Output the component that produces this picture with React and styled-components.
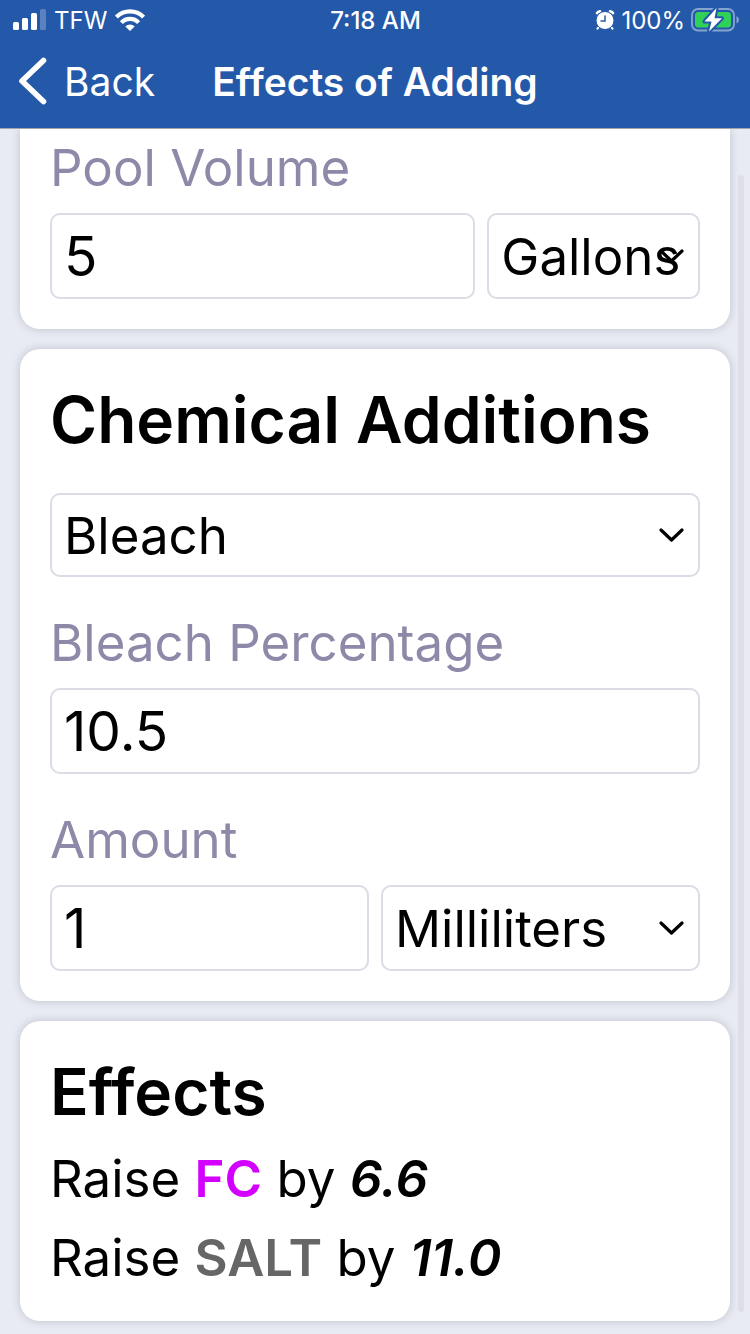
import React from 'react';
import styled, { createGlobalStyle } from 'styled-components';

const GlobalStyle = createGlobalStyle`
  *, *::before, *::after { box-sizing: border-box; }
  body {
    margin: 0;
    background: #e8ebf4;
    color: #000;
    font-family: Inter, "Liberation Sans", sans-serif;
    font-size: 51px;
  }
`;

const Header = styled.header`
  position: sticky;
  top: 0;
  z-index: 2;
  background: #2459a9;
  color: #fff;
  border-bottom: 1px solid #a2a4a9;
`;

const StatusBar = styled.div`
  display: grid;
  grid-template-columns: 1fr auto 1fr;
  align-items: center;
  height: 40px;
  padding: 0 11px 0 12px;
  font-size: 24px;
`;

const StatusGroup = styled.div`
  display: flex;
  align-items: center;
  justify-content: ${(p) => (p.$end ? 'flex-end' : 'flex-start')};
  gap: ${(p) => (p.$end ? 6 : 8)}px;
`;

const Clock = styled.time`
  font-weight: 500;
`;

const NavBar = styled.nav`
  display: grid;
  grid-template-columns: 1fr auto 1fr;
  align-items: center;
  height: 88px;
  padding: 0 18px 6px;
`;

const BackLink = styled.a`
  display: flex;
  align-items: center;
  gap: 16px;
  color: inherit;
  font-size: 39px;
  text-decoration: none;
`;

const Title = styled.h1`
  margin: 0;
  font-size: 39px;
  font-weight: 600;
`;

const Content = styled.main`
  display: flex;
  flex-direction: column;
  gap: 20px;
  padding: 0 20px 13px;
`;

const Card = styled.section`
  padding: ${(p) => (p.$scrolled ? '3px 30px 30px' : '30px')};
  border-radius: ${(p) => (p.$scrolled ? '0 0 20px 20px' : '20px')};
  background: #fff;
  box-shadow: 0 0 10px rgba(0, 0, 0, 0.18);
`;

const Heading = styled.h2`
  margin: 0 0 ${(p) => (p.$tight ? 12 : 32)}px;
  font-size: 64px;
  line-height: 82px;
  font-weight: 600;
`;

const Field = styled.div`
  & + & { margin-top: 30px; }
`;

const Label = styled.label`
  display: block;
  padding-bottom: 9px;
  color: #8e89a8;
  line-height: 72px;
`;

const Row = styled.div`
  display: grid;
  grid-template-columns: ${(p) => p.$columns};
  gap: 12px;
`;

const TextInput = styled.input`
  display: block;
  width: 100%;
  min-width: 0;
  height: 86px;
  padding: 0 12px;
  border: 2px solid #dcdbe6;
  border-radius: 10px;
  background: #fff;
  color: inherit;
  font: inherit;
  font-size: 55px;
  outline: none;
`;

const SelectWrap = styled.div`
  position: relative;
  min-width: 0;
`;

const SelectBox = styled.select`
  display: block;
  appearance: none;
  width: 100%;
  height: ${(p) => (p.$short ? 84 : 86)}px;
  padding: 0 0 0 12px;
  border: 2px solid #dcdbe6;
  border-radius: 10px;
  background: #fff;
  color: inherit;
  font: inherit;
  outline: none;
`;

const Chevron = styled.svg`
  position: absolute;
  top: 50%;
  right: 16px;
  transform: translateY(-50%);
  pointer-events: none;
`;

const Effect = styled.p`
  margin: 0;
  line-height: 67px;
  & + & { margin-top: 12px; }
`;

const Chemical = styled.span`
  color: ${(p) => p.$color};
  font-weight: 600;
`;

const Value = styled.em`
  font-weight: 600;
`;

const ScrollThumb = styled.div`
  position: fixed;
  z-index: 1;
  top: 175px;
  right: 6px;
  bottom: 22px;
  width: 6px;
  border-radius: 3px;
  background: #dfdee8;
`;

function Select({ options, ...rest }) {
  return (
    <SelectWrap>
      <SelectBox {...rest}>
        {options.map((o) => (
          <option key={o}>{o}</option>
        ))}
      </SelectBox>
      <Chevron width="25" height="15" viewBox="0 0 25 15" aria-hidden="true">
        <path d="M2 2.500L12.500 12.500L23 2.500" fill="none" stroke="#000" strokeWidth="3.200" strokeLinecap="round" strokeLinejoin="round" />
      </Chevron>
    </SelectWrap>
  );
}

const SignalIcon = () => (
  <svg width="34" height="22" viewBox="0 0 34 22" aria-hidden="true" fill="#fff">
    <rect x="1" y="13" width="6" height="8" rx="1.500" />
    <rect x="10" y="9" width="6" height="12" rx="1.500" />
    <rect x="19" y="4" width="6" height="17" rx="1.500" />
    <rect x="28" y="0" width="6" height="21" rx="1.500" opacity="0.250" />
  </svg>
);

const WifiIcon = () => (
  <svg width="30" height="22" viewBox="0 0 30 22" aria-hidden="true">
    <g fill="none" stroke="#fff" strokeWidth="4.200">
      <path d="M1.400 8.100A19 19 0 0 1 28.600 8.100" />
      <path d="M6.400 13.600A11.700 11.700 0 0 1 23.600 13.600" />
    </g>
    <path d="M15 22L10.300 17.400A6.700 6.700 0 0 1 19.700 17.400Z" fill="#fff" />
  </svg>
);

const AlarmIcon = () => (
  <svg width="20" height="20" viewBox="0 0 20 20" aria-hidden="true">
    <g fill="none" stroke="#fff" strokeLinecap="round">
      <path d="M2 3.200Q2.800 1.600 5 1.400M18 3.200Q17.200 1.600 15 1.400" strokeWidth="2.600" />
      <path d="M4 17L2.500 18.700M16 17L17.500 18.700" strokeWidth="2" />
    </g>
    <circle cx="10" cy="10.500" r="9" fill="#fff" stroke="#2459a9" strokeWidth="1" />
    <path d="M10 5.500V11H5.500" fill="none" stroke="#2459a9" strokeWidth="1.500" />
  </svg>
);

const BatteryIcon = () => (
  <svg width="48" height="24" viewBox="0 0 48 24" aria-hidden="true">
    <rect x="1" y="1" width="42" height="21.500" rx="6" fill="none" stroke="#fff" strokeWidth="1.800" opacity="0.450" />
    <path d="M45.500 8Q48 9 48 11.700T45.500 15.500Z" fill="#fff" opacity="0.450" />
    <rect x="4" y="4" width="36" height="15.500" rx="3.500" fill="#30d158" />
    <path d="M25.500 0L13.500 13.400H20.500L18 23.500L31 10.300H23.500Z" fill="#fff" stroke="#2459a9" strokeWidth="4" strokeLinejoin="round" />
    <path d="M25.500 0L13.500 13.400H20.500L18 23.500L31 10.300H23.500Z" fill="#fff" />
  </svg>
);

const BackIcon = () => (
  <svg width="30" height="48" viewBox="0 0 30 48" aria-hidden="true">
    <path d="M25.500 3.500L4 24L25.500 44.500" fill="none" stroke="#fff" strokeWidth="5.600" strokeLinecap="round" strokeLinejoin="round" />
  </svg>
);

export default function App() {
  return (
    <>
      <GlobalStyle />
      <Header>
        <StatusBar>
          <StatusGroup>
            <SignalIcon />
            <span>TFW</span>
            <WifiIcon />
          </StatusGroup>
          <Clock>7:18 AM</Clock>
          <StatusGroup $end>
            <AlarmIcon />
            <span>100%</span>
            <BatteryIcon />
          </StatusGroup>
        </StatusBar>
        <NavBar>
          <BackLink href="#back">
            <BackIcon />
            Back
          </BackLink>
          <Title>Effects of Adding</Title>
        </NavBar>
      </Header>
      <Content>
        <Card $scrolled>
          <Label htmlFor="volume">Pool Volume</Label>
          <Row $columns="2fr 1fr">
            <TextInput id="volume" inputMode="decimal" defaultValue="5" />
            <Select aria-label="Volume unit" options={['Gallons', 'Liters']} />
          </Row>
        </Card>
        <Card>
          <Heading>Chemical Additions</Heading>
          <Field>
            <Select $short aria-label="Chemical" options={['Bleach', 'Salt']} />
          </Field>
          <Field>
            <Label htmlFor="percentage">Bleach Percentage</Label>
            <TextInput id="percentage" inputMode="decimal" defaultValue="10.5" />
          </Field>
          <Field>
            <Label htmlFor="amount">Amount</Label>
            <Row $columns="1fr 1fr">
              <TextInput id="amount" inputMode="decimal" defaultValue="1" />
              <Select aria-label="Amount unit" options={['Milliliters', 'Ounces']} />
            </Row>
          </Field>
        </Card>
        <Card>
          <Heading $tight>Effects</Heading>
          <Effect>
            Raise <Chemical $color="#d400ff">FC</Chemical> by <Value>6.6</Value>
          </Effect>
          <Effect>
            Raise <Chemical $color="#666666">SALT</Chemical> by <Value>11.0</Value>
          </Effect>
        </Card>
      </Content>
      <ScrollThumb />
    </>
  );
}
